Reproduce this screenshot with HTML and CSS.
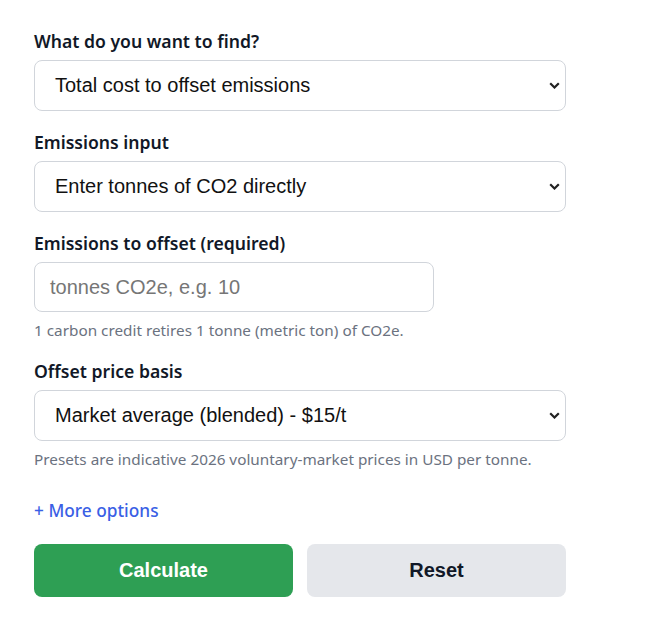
FILE: index.html
```html
<!DOCTYPE html>
<html>
<head>
<meta charset="utf-8">
<link rel="stylesheet" href="styles.css">
</head>
<body>
<form class="calc">
  <div class="field">
    <label class="label">What do you want to find?</label>
    <div class="select">Total cost to offset emissions<span class="chev"><svg width="11" height="7" viewBox="0 0 11 7"><path d="M1.2 1.2 L5.5 5.5 L9.8 1.2" fill="none" stroke="#222" stroke-width="2.2"/></svg></span></div>
  </div>
  <div class="field">
    <label class="label">Emissions input</label>
    <div class="select">Enter tonnes of CO2 directly<span class="chev"><svg width="11" height="7" viewBox="0 0 11 7"><path d="M1.2 1.2 L5.5 5.5 L9.8 1.2" fill="none" stroke="#222" stroke-width="2.2"/></svg></span></div>
  </div>
  <div class="field">
    <label class="label">Emissions to offset (required)</label>
    <div class="input"><span class="ph">tonnes CO2e, e.g. 10</span></div>
    <p class="help">1 carbon credit retires 1 tonne (metric ton) of CO2e.</p>
  </div>
  <div class="field">
    <label class="label">Offset price basis</label>
    <div class="select">Market average (blended) - $15/t<span class="chev"><svg width="11" height="7" viewBox="0 0 11 7"><path d="M1.2 1.2 L5.5 5.5 L9.8 1.2" fill="none" stroke="#222" stroke-width="2.2"/></svg></span></div>
    <p class="help">Presets are indicative 2026 voluntary-market prices in USD per tonne.</p>
  </div>
  <a class="more">+ More options</a>
  <div class="buttons">
    <button type="button" class="btn primary">Calculate</button>
    <button type="button" class="btn secondary">Reset</button>
  </div>
</form>
</body>
</html>
```
FILE: styles.css
```css
body {
  margin: 0;
  background: #fff;
  font-family: "Noto Sans", sans-serif;
}
.calc {
  width: 532px;
  padding: 29px 0 0 34px;
  display: flex;
  flex-direction: column;
}
.field {
  display: flex;
  flex-direction: column;
  margin-bottom: 19px;
}
.label {
  font-size: 17.6px;
  font-weight: 600;
  color: #111827;
  line-height: 24px;
  margin-bottom: 7px;
}
.select, .input {
  box-sizing: border-box;
  height: 51px;
  border: 1px solid #d1d5db;
  border-radius: 8px;
  display: flex;
  align-items: center;
  justify-content: space-between;
  padding: 0 5px 0 20px;
  font-family: "Liberation Sans", Arial, sans-serif;
  font-size: 20px;
  color: #111;
  background: #fff;
}
.input {
  width: 400px;
  height: 50px;
  padding-left: 15px;
}
.ph { color: #767676; }
.chev { display: flex; align-items: center; }
.help {
  margin: 9px 0 0;
  font-size: 15.3px;
  color: #6b7280;
  line-height: 19px;
}
.more {
  margin-top: 11px;
  font-size: 17.3px;
  font-weight: 500;
  color: #3a5fe5;
  line-height: 24px;
}
.buttons {
  margin-top: 21px;
  display: grid;
  grid-template-columns: 1fr 1fr;
  gap: 14px;
}
.btn {
  height: 53px;
  border: none;
  border-radius: 8px;
  font-family: "Liberation Sans", Arial, sans-serif;
  font-size: 20px;
  font-weight: 700;
}
.primary { background: #2e9f54; color: #fff; }
.secondary { background: #e5e7eb; color: #111827; }
```
